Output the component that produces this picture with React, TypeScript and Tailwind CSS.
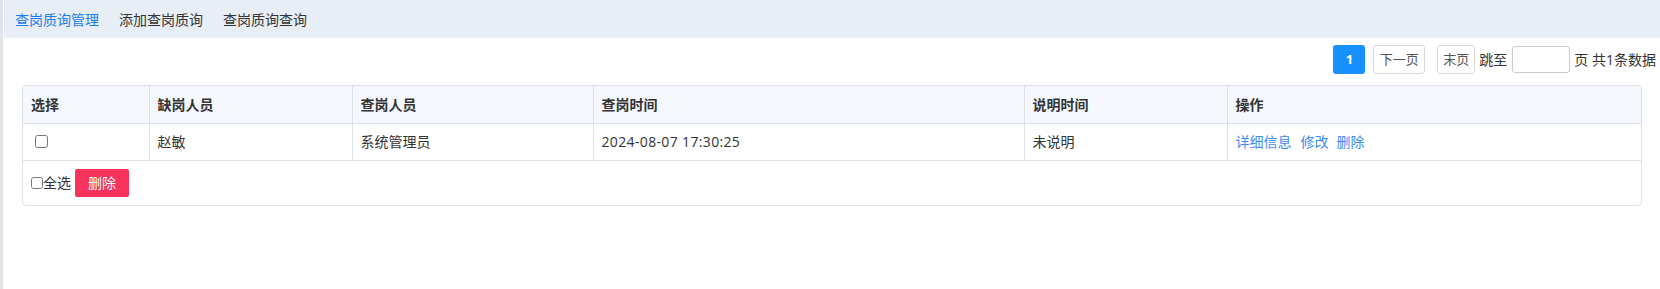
const font = { fontFamily: '"Open Sans", "Noto Sans CJK SC", sans-serif' };

const rows = [
  { absent: "赵敏", checker: "系统管理员", time: "2024-08-07 17:30:25", explain: "未说明" },
];

const App = () => {
  return (
    <div className="flex h-[289px] bg-white text-[14px] text-[#333]" style={font}>
      <div className="w-[3px] shrink-0 bg-[#e1e3e7]" />
      <div className="ml-[1px] flex flex-1 flex-col">
        <nav className="flex h-[38px] items-center gap-[20px] bg-[#e8eef6] pl-[11px]">
          <a className="text-[#1a7cf5]">查岗质询管理</a>
          <a className="text-[#333]">添加查岗质询</a>
          <a className="text-[#333]">查岗质询查询</a>
        </nav>

        <div className="mt-[7px] flex items-center justify-end pr-[4px]">
          <button className="h-[29px] w-[32px] rounded-[3px] bg-[#1890ff] text-[13px] font-bold text-white">
            1
          </button>
          <button className="ml-[8px] h-[29px] w-[52px] rounded-[3px] border border-[#d9d9d9] text-[13px] text-[#555]">
            下一页
          </button>
          <button className="ml-[12px] h-[29px] w-[38px] rounded-[3px] border border-[#d9d9d9] text-[13px] text-[#555]">
            末页
          </button>
          <span className="ml-[4px]">跳至</span>
          <input className="ml-[5px] h-[27px] w-[58px] rounded-[3px] border border-[#ccc]" />
          <span className="ml-[4px]">页 共1条数据</span>
        </div>

        <div className="mx-[18px] mt-[11px] overflow-hidden rounded-[4px] border border-[#dde0e5]">
          <table className="w-full table-fixed border-collapse">
            <colgroup>
              <col className="w-[126px]" />
              <col className="w-[203px]" />
              <col className="w-[241px]" />
              <col className="w-[431px]" />
              <col className="w-[203px]" />
              <col />
            </colgroup>
            <thead>
              <tr className="h-[37px] bg-[#f5f9ff] text-left">
                {["选择", "缺岗人员", "查岗人员", "查岗时间", "说明时间", "操作"].map((h, i) => (
                  <th
                    key={h}
                    className={`border-b border-[#dde0e5] px-[8px] font-semibold text-[#333] ${i < 5 ? "border-r" : ""}`}
                  >
                    {h}
                  </th>
                ))}
              </tr>
            </thead>
            <tbody>
              {rows.map((r) => (
                <tr key={r.time} className="h-[37px]">
                  <td className="border-r border-b border-[#dde0e5] px-[8px]">
                    <input type="checkbox" className="ml-[4px] block h-[13px] w-[13px]" />
                  </td>
                  <td className="border-r border-b border-[#dde0e5] px-[8px]">{r.absent}</td>
                  <td className="border-r border-b border-[#dde0e5] px-[8px]">{r.checker}</td>
                  <td className="border-r border-b border-[#dde0e5] px-[8px] tracking-[0.35px]">{r.time}</td>
                  <td className="border-r border-b border-[#dde0e5] px-[8px]">{r.explain}</td>
                  <td className="border-b border-[#dde0e5] px-[8px] text-[#3b8cf5]">
                    <a>详细信息</a>
                    <a className="ml-[9px]">修改</a>
                    <a className="ml-[8px]">删除</a>
                  </td>
                </tr>
              ))}
            </tbody>
          </table>
          <div className="flex h-[44px] items-center pl-[8px]">
            <input type="checkbox" className="h-[12px] w-[12px]" />
            <span>全选</span>
            <button className="ml-[4px] h-[28px] w-[54px] rounded-[2px] bg-[#f7325b] text-white">删除</button>
          </div>
        </div>
      </div>
    </div>
  );
};

export default App;
